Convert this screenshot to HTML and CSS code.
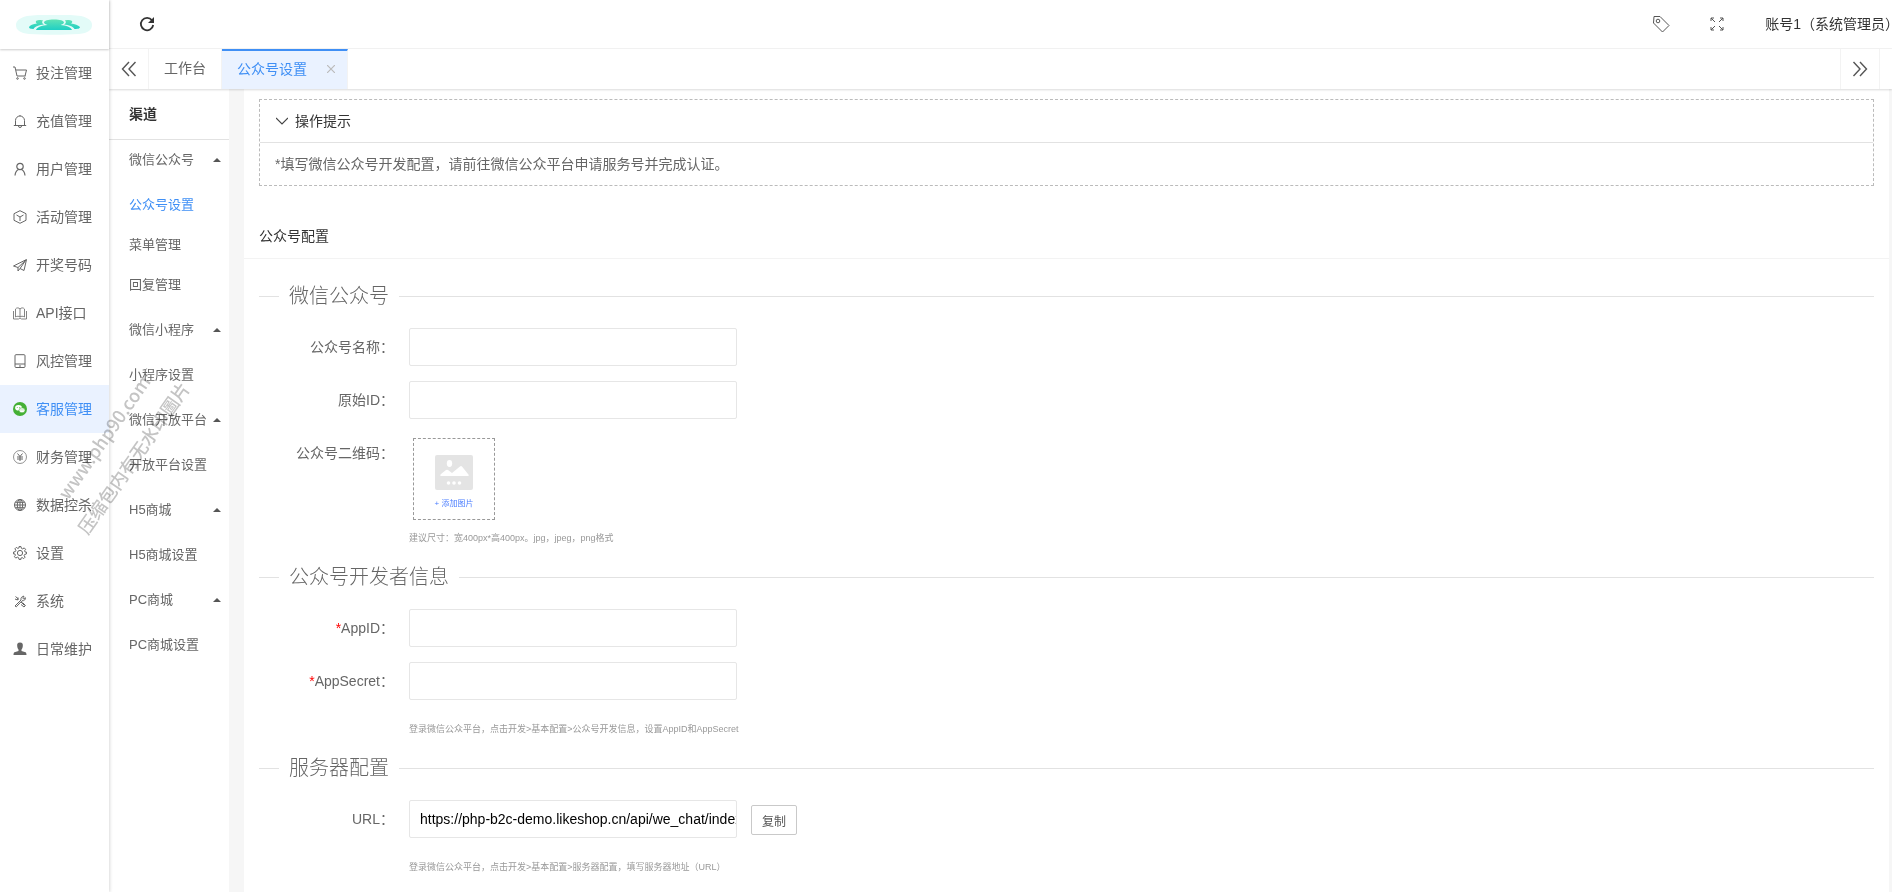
FILE: index.html
```html
<!DOCTYPE html>
<html lang="zh-CN">
<head>
  <meta charset="UTF-8">
  <title>公众号设置</title>
  <link rel="stylesheet" href="styles.css">
</head>
<body>

  <aside class="side">
    <div class="logo">
      <svg width="78" height="20" viewBox="0 0 78 20">
        <defs>
          <linearGradient id="lg" x1="0" y1="0" x2="0" y2="1">
            <stop offset="0" stop-color="#5fe3b5"/>
            <stop offset="1" stop-color="#1fcfc4"/>
          </linearGradient>
        </defs>
        <path d="M12 1C28 -1 50 -1 66 1C74 3 77 6 77 10C77 15 73 18 64 19C48 20 30 20 14 19C5 18 1 15 1 10C1 6 4 3 12 1Z" fill="#e3fbf8"/>
        <g fill="url(#lg)">
          <path d="M39 4.500C45 4.500 49 5.800 49 7.500C49 8.800 47 9.500 45.500 10C51 10.500 56 12 57 15H21C22 12 27 10.500 32.500 10C31 9.500 29 8.800 29 7.500C29 5.800 33 4.500 39 4.500Z"/>
          <path d="M21 6C23 4.500 27 4.800 28 5.500C26.500 7 27 8.500 29 9.500C24 10 20 11.500 18.500 14C15 14 14 13 14 12C15 10 18 9 22 8.500C21 8 20.500 7 21 6Z"/>
          <path d="M57 6C55 4.500 51 4.800 50 5.500C51.500 7 51 8.500 49 9.500C54 10 58 11.500 59.500 14C64 14 65 13 65 12C63 10 60 9 56 8.500C57 8 57.500 7 57 6Z"/>
        </g>
      </svg>
    </div>
    <nav class="menu">
      <a href="#"><svg class="ico" viewBox="0 0 14 14"><path d="M0 1h2l2 9h8.500M3 4h10.500l-1.500 6"/><circle cx="4.500" cy="12.500" r=".8"/><circle cx="11.500" cy="12.500" r=".8"/></svg>投注管理</a>
      <a href="#"><svg class="ico" viewBox="0 0 14 14"><path d="M.8 11.500h12.400M2.500 11V6.500a4.500 4.500 0 0 1 9 0V11M5.500 12a1.500 1.500 0 0 0 3 0M7 1v1"/></svg>充值管理</a>
      <a href="#"><svg class="ico" viewBox="0 0 14 14" stroke-width="1.200"><circle cx="7" cy="4.500" r="3.200"/><path d="M2 13.500c.3-3 1.500-5 3.500-6M12 13.500c-.3-3-1.500-5-3.500-6"/></svg>用户管理</a>
      <a href="#"><svg class="ico" viewBox="0 0 14 14"><path d="M7 .7l6 3v6.600l-6 3-6-3V3.700zM3.500 5L7 7l3.500-2M7 7v4"/></svg>活动管理</a>
      <a href="#"><svg class="ico" viewBox="0 0 14 14"><path d="M.5 8L13.500 1.500 11 12.500 7 10.500 5 13V9.500zM5 9.500l8-7.500-6 8.500"/></svg>开奖号码</a>
      <a href="#"><svg class="ico" viewBox="0 0 14 14" stroke-width=".8"><path d="M7 3C6 1.500 3.500 1.500 2.500 3v8c1.500-1 3.500-1 4.500 0 1-1 3-1 4.500 0V3C10.500 1.500 8 1.500 7 3zM7 3v8M.5 5v8h5l1.500-1 1.500 1h5V5"/></svg>API接口</a>
      <a href="#"><svg class="ico" viewBox="0 0 14 14"><rect x="2" y=".7" width="10" height="12.800" rx="1"/><path d="M2 10h10M6 12h2"/></svg>风控管理</a>
      <a href="#" class="on"><svg class="ico" viewBox="0 0 14 14"><circle cx="7" cy="7" r="7" fill="#44b035" stroke="none"/><ellipse cx="5.500" cy="5.800" rx="3.400" ry="2.800" fill="#fff" stroke="none"/><ellipse cx="9" cy="8.300" rx="3" ry="2.500" fill="#fff" stroke="#44b035" stroke-width=".6"/><path d="M4.300 5v.8M6.600 5v.8M8 7.500v.8M10 7.500v.8" stroke="#44b035" stroke-width=".8"/></svg>客服管理</a>
      <a href="#"><svg class="ico" viewBox="0 0 14 14"><circle cx="7" cy="7" r="6.500" stroke-width=".7"/><path d="M4.500 3.500L7 6.500l2.500-3M7 6.500V11M4 7h6M4 9h6"/></svg>财务管理</a>
      <a href="#"><svg class="ico" viewBox="0 0 14 14"><circle cx="7" cy="7" r="5.500"/><ellipse cx="7" cy="7" rx="2.700" ry="5.500"/><path d="M7 1.500v11M1.500 7h11M2.300 4.300h9.400M2.300 9.700h9.400"/></svg>数据控杀</a>
      <a href="#"><svg class="ico" viewBox="0 0 14 14"><path d="M6 .6h2l.4 1.700 1.300.6 1.500-1 1.400 1.400-1 1.500.6 1.300L13.400 6v2l-1.700.4-.6 1.300 1 1.500-1.400 1.400-1.500-1-1.300.6L8 13.400H6l-.4-1.700-1.300-.6-1.500 1-1.400-1.400 1-1.500-.6-1.300L.6 8V6l1.700-.4.600-1.300-1-1.500 1.400-1.400 1.500 1 1.300-.6z"/><circle cx="7" cy="7" r="2.600"/></svg>设置</a>
      <a href="#"><svg class="ico" viewBox="0 0 14 14"><path d="M2.500 2.500l3.500 3M8 8l3.500 3.500M2 12l6-6C7.500 4 9 2 11 2.200L9.700 4l1 1L12.300 3.600C13 5.500 11 7 9 6.800L3.300 12.800zM2 5l2.500 1L5 3.500M8 10.500l3 2.500 1.500-1.500-3-3"/></svg>系统</a>
      <a href="#"><svg class="ico" viewBox="0 0 14 14"><path d="M7 .5C9.500 .5 10 2 9.800 4 9.700 6 9 7 8.500 7.500V9l4 1.300c.7.300 1 1.200 1 2.700H.5c0-1.500.3-2.400 1-2.700L5.500 9V7.500C5 7 4.300 6 4.200 4 4 2 4.500 .5 7 .5z" fill="currentColor" stroke="none"/></svg>日常维护</a>
    </nav>
  </aside>

  <div class="right">
    <header class="top">
      <button class="icon-btn refresh" aria-label="刷新"><svg width="16" height="16" viewBox="0 0 16 16"><path d="M13 4.300A6.200 6.200 0 1 0 14.200 9" fill="none" stroke="#333" stroke-width="1.800"/><path d="M15 1v6H9z" fill="#333"/></svg></button>
      <button class="icon-btn tag" aria-label="标签"><svg width="18" height="18" viewBox="0 0 18 18" fill="none" stroke="#555"><path d="M2 1.500h6L17 10.500l-6.500 6.500L1.500 8z" stroke-linejoin="round"/><circle cx="6" cy="6" r="1.800"/></svg></button>
      <button class="icon-btn full" aria-label="全屏"><svg width="14" height="14" viewBox="0 0 14 14" fill="none" stroke="#555"><path d="M1 4V1h3M1 1l4 4M10 1h3v3M13 1L9 5M1 10v3h3M1 13l4-4M10 13h3v-3M13 13L9 9"/></svg></button>
      <span class="user">账号1（系统管理员<span class="half">）</span></span>
    </header>

    <div class="tabs">
      <button class="icon-btn tab-arrow" aria-label="向左"><svg width="16" height="16" viewBox="0 0 16 16"><path d="M8 1L1.500 8 8 15M14.500 1L8 8l6.500 7" fill="none" stroke="#555" stroke-width="1.400"/></svg></button>
      <a href="#" class="tab">工作台</a>
      <a href="#" class="tab tab-on">公众号设置 <svg width="8" height="8" viewBox="0 0 8 8"><path d="M0 0l8 8M8 0L0 8" stroke="#bbb" stroke-width="1.200"/></svg></a>
      <button class="icon-btn tab-arrow tab-next" aria-label="向右"><svg width="16" height="16" viewBox="0 0 16 16"><path d="M1.500 1L8 8l-6.500 7M8 1l6.500 7L8 15" fill="none" stroke="#555" stroke-width="1.400"/></svg></button>
    </div>

    <div class="body">
      <nav class="sub">
        <h2>渠道</h2>
        <a href="#" class="group">微信公众号</a>
        <div class="list">
          <a href="#" class="on">公众号设置</a>
          <a href="#">菜单管理</a>
          <a href="#">回复管理</a>
        </div>
        <a href="#" class="group">微信小程序</a>
        <div class="list"><a href="#">小程序设置</a></div>
        <a href="#" class="group">微信开放平台</a>
        <div class="list"><a href="#">开放平台设置</a></div>
        <a href="#" class="group">H5商城</a>
        <div class="list"><a href="#">H5商城设置</a></div>
        <a href="#" class="group">PC商城</a>
        <div class="list"><a href="#">PC商城设置</a></div>
      </nav>

      <main class="main">
        <section class="tips">
          <h3><svg width="12" height="8" viewBox="0 0 12 8"><path d="M0 1l6 6 6-6" fill="none" stroke="#444" stroke-width="1.200"/></svg>操作提示</h3>
          <p>*填写微信公众号开发配置，请前往微信公众平台申请服务号并完成认证。</p>
        </section>

        <h1 class="title">公众号配置</h1>

        <form class="form">
          <h2 class="legend"><span>微信公众号</span></h2>
          <div class="row">
            <label for="name">公众号名称：</label>
            <input type="text" id="name">
          </div>
          <div class="row">
            <label for="oid">原始ID：</label>
            <input type="text" id="oid">
          </div>
          <div class="row row-upload">
            <label for="qr">公众号二维码：</label>
            <button type="button" class="upload" id="qr">
              <svg width="38" height="35" viewBox="0 0 38 35"><rect width="38" height="35" rx="2" fill="#e4e4e4"/><g fill="#fff"><ellipse cx="14.500" cy="8.500" rx="2.700" ry="3.400"/><path d="M6 21c-1 0-1-1 0-2l5-4q1-.7 2 0l4 3 8-6.500q1-.8 2 0l6 7.500c1 1 1 2 0 2z"/><circle cx="13.500" cy="28" r="1.800"/><circle cx="19" cy="28" r="1.800"/><circle cx="24.500" cy="28" r="1.800"/></g></svg>
              <span>+ 添加图片</span>
            </button>
          </div>
          <p class="hint">建议尺寸：宽400px*高400px。jpg，jpeg，png格式</p>

          <h2 class="legend"><span>公众号开发者信息</span></h2>
          <div class="row">
            <label for="appid"><i>*</i>AppID：</label>
            <input type="text" id="appid">
          </div>
          <div class="row">
            <label for="secret"><i>*</i>AppSecret：</label>
            <input type="text" id="secret">
          </div>
          <p class="hint">登录微信公众平台，点击开发&gt;基本配置&gt;公众号开发信息，设置AppID和AppSecret</p>

          <h2 class="legend"><span>服务器配置</span></h2>
          <div class="row">
            <label for="url">URL：</label>
            <input type="text" id="url" value="https://php-b2c-demo.likeshop.cn/api/we_chat/index">
            <button type="button" class="copy">复制</button>
          </div>
          <p class="hint">登录微信公众平台，点击开发&gt;基本配置&gt;服务器配置，填写服务器地址（URL）</p>
        </form>
      </main>
    </div>
  </div>

  <div class="watermark">www.php90.com<br>压缩包内有无水印圖片</div>

</body>
</html>
```
FILE: styles.css
```css
* {
  box-sizing: border-box;
  margin: 0;
  padding: 0;
}
body {
  display: flex;
  height: 100vh;
  overflow: hidden;
  background: #f6f6f6;
  color: #666;
  font: 14px/24px "Liberation Sans", "Noto Sans CJK SC", sans-serif;
}
a {
  color: inherit;
  text-decoration: none;
}
input, button {
  font-family: inherit;
}
.icon-btn {
  display: flex;
  align-items: center;
  justify-content: center;
  background: none;
  border: none;
  cursor: pointer;
}

/* left menu */
.side {
  position: relative;
  z-index: 2;
  flex: none;
  width: 109px;
  background: #fff;
  box-shadow: 1px 0 3px rgba(0, 0, 0, 0.15);
}
.logo {
  height: 49px;
  padding: 15px 0 0 15px;
  box-shadow: 0 1px 2px rgba(0, 0, 0, 0.2);
}
.logo svg {
  display: block;
}
.menu a {
  display: flex;
  align-items: center;
  gap: 9px;
  height: 48px;
  padding-left: 13px;
}
.menu .on {
  background: #eaf2ff;
  color: #3f8ff5;
}
.ico {
  width: 14px;
  height: 14px;
  fill: none;
  stroke: currentColor;
}

/* top bar */
.right {
  flex: 1;
  min-width: 0;
  display: flex;
  flex-direction: column;
}
.top {
  flex: none;
  display: flex;
  align-items: center;
  height: 49px;
  padding-left: 15px;
  background: #fff;
  border-bottom: 1px solid #f3f3f3;
  color: #333;
}
.icon-btn.refresh {
  width: 46px;
  margin-right: auto;
}
.icon-btn.tag, .icon-btn.full {
  width: 56px;
}
.user {
  margin-left: 20px;
  white-space: nowrap;
}
.half {
  font-feature-settings: "halt";
}
.tabs {
  position: relative;
  z-index: 1;
  flex: none;
  display: flex;
  height: 40px;
  background: #fff;
  box-shadow: 0 1px 2px rgba(0, 0, 0, 0.15);
}
.tab-arrow {
  width: 40px;
  border-right: 1px solid #f3f3f3;
}
.tab {
  padding: 0 15px;
  line-height: 38px;
  border-right: 1px solid #f3f3f3;
}
.tab-on {
  display: flex;
  align-items: center;
  gap: 20px;
  padding: 0 12px 2px 15px;
  background: #eaf2ff;
  border-top: 2px solid #3f8ff5;
  color: #3f8ff5;
  line-height: 36px;
}
.tab-next {
  margin-left: auto;
  margin-right: 12px;
  border-left: 1px solid #f3f3f3;
}

/* second menu */
.body {
  flex: 1;
  display: flex;
  min-height: 0;
}
.sub {
  flex: none;
  width: 120px;
  margin-right: 15px;
  background: #fff;
  font-size: 13px;
  line-height: 40px;
}
.sub h2 {
  height: 51px;
  padding: 5px 20px 0;
  border-bottom: 1px solid #e2e2e2;
  color: #333;
  font-size: 14px;
}
.sub a {
  display: block;
  padding-left: 20px;
  white-space: nowrap;
}
.sub .group {
  display: flex;
  align-items: center;
  justify-content: space-between;
  padding-right: 8px;
}
.group::after {
  content: "";
  border: 4px solid transparent;
  border-top: none;
  border-bottom-color: #555;
}
.list {
  padding: 5px 0;
}
.sub .on {
  color: #3f8ff5;
}

/* content */
.main {
  flex: 1;
  min-width: 0;
  margin-right: 3px;
  padding: 10px 15px;
  overflow: hidden;
  background: #fff;
}
.tips {
  border: 1px dashed #bbb;
}
.tips h3 {
  display: flex;
  align-items: center;
  gap: 7px;
  height: 43px;
  padding-left: 16px;
  border-bottom: 1px solid #e2e2e2;
  color: #333;
  font-size: 14px;
  font-weight: normal;
}
.tips p {
  padding: 9px 15px;
}
.title {
  margin: 29px -15px 0;
  padding-left: 15px;
  border-bottom: 1px solid #f3f3f3;
  color: #333;
  font-size: 14px;
  font-weight: normal;
  line-height: 43px;
}
.legend {
  display: flex;
  align-items: center;
  gap: 10px;
  margin-bottom: 17px;
  font-size: 20px;
  font-weight: 300;
  line-height: 30px;
}
.legend::before, .legend::after {
  content: "";
  width: 20px;
  border-top: 1px solid #e2e2e2;
}
.legend::after {
  flex: 1;
}
.form {
  padding-top: 22px;
}
.row {
  display: flex;
  margin-bottom: 15px;
}
.row-upload {
  margin-bottom: 4px;
}
.row label {
  width: 150px;
  padding-right: 15px;
  line-height: 38px;
  text-align: right;
}
.row i {
  color: red;
  font-style: normal;
}
.row input {
  width: 328px;
  height: 38px;
  padding-left: 10px;
  border: 1px solid #e6e6e6;
  border-radius: 2px;
  font-size: 14px;
}
.upload {
  display: flex;
  flex-direction: column;
  align-items: center;
  gap: 6px;
  width: 82px;
  height: 82px;
  margin: 4px 4px 0;
  padding-top: 16px;
  background: none;
  border: 1px dashed #999;
  color: #4a7dff;
  font-size: 8px;
  line-height: 16px;
}
.hint {
  margin-bottom: 12px;
  padding: 2px 0 0 150px;
  color: #999;
  font-size: 9px;
  line-height: 24px;
}
.copy {
  width: 46px;
  height: 30px;
  margin: 5px 0 0 14px;
  background: #fff;
  border: 1px solid #c9c9c9;
  border-radius: 2px;
  color: #555;
  font-size: 12px;
}

.watermark {
  position: absolute;
  z-index: 3;
  left: 23px;
  top: 411px;
  width: 190px;
  color: #c4c4c4;
  font: 500 18px/36px "Noto Sans CJK SC", sans-serif;
  text-align: center;
  white-space: nowrap;
  transform: rotate(-55deg);
  mix-blend-mode: multiply;
  pointer-events: none;
}
```
